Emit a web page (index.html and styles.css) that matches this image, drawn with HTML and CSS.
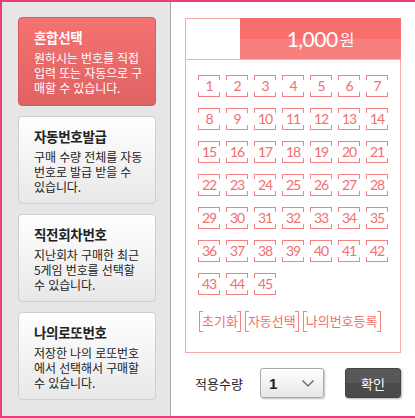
FILE: index.html
```html
<!DOCTYPE html>
<html lang="ko">
<head>
<meta charset="utf-8">
<link rel="stylesheet" href="styles.css">
</head>
<body>
<div class="page">
  <aside class="side">
    <div class="card card-active">
      <h3 class="card-title">혼합선택</h3>
      <p class="card-desc">원하시는 번호를 직접<br>입력 또는 자동으로 구<br>매할 수 있습니다.</p>
    </div>
    <div class="card">
      <h3 class="card-title">자동번호발급</h3>
      <p class="card-desc">구매 수량 전체를 자동<br>번호로 발급 받을 수<br>있습니다.</p>
    </div>
    <div class="card">
      <h3 class="card-title">직전회차번호</h3>
      <p class="card-desc">지난회차 구매한 최근<br>5게임 번호를 선택할<br>수 있습니다.</p>
    </div>
    <div class="card">
      <h3 class="card-title">나의로또번호</h3>
      <p class="card-desc">저장한 나의 로또번호<br>에서 선택해서 구매할<br>수 있습니다.</p>
    </div>
  </aside>
  <main class="main">
    <div class="board">
      <div class="board-head">
        <div class="head-blank"></div>
        <div class="price"><span class="price-num">1,000</span><span class="price-unit">원</span></div>
      </div>
      <div class="numbers">
        <span class="num">1</span><span class="num">2</span><span class="num">3</span><span class="num">4</span><span class="num">5</span><span class="num">6</span><span class="num">7</span>
        <span class="num">8</span><span class="num">9</span><span class="num">10</span><span class="num">11</span><span class="num">12</span><span class="num">13</span><span class="num">14</span>
        <span class="num">15</span><span class="num">16</span><span class="num">17</span><span class="num">18</span><span class="num">19</span><span class="num">20</span><span class="num">21</span>
        <span class="num">22</span><span class="num">23</span><span class="num">24</span><span class="num">25</span><span class="num">26</span><span class="num">27</span><span class="num">28</span>
        <span class="num">29</span><span class="num">30</span><span class="num">31</span><span class="num">32</span><span class="num">33</span><span class="num">34</span><span class="num">35</span>
        <span class="num">36</span><span class="num">37</span><span class="num">38</span><span class="num">39</span><span class="num">40</span><span class="num">41</span><span class="num">42</span>
        <span class="num">43</span><span class="num">44</span><span class="num">45</span>
      </div>
      <div class="actions">
        <span class="act">초기화</span>
        <span class="act">자동선택</span>
        <span class="act">나의번호등록</span>
      </div>
    </div>
    <div class="controls">
      <span class="qty-label">적용수량</span>
      <div class="select">
        <span class="select-val">1</span>
        <svg class="chev" width="12" height="7" viewBox="0 0 12 7"><path d="M0.5 0.5 L6 6 L11.5 0.5" fill="none" stroke="#555" stroke-width="1.1"/></svg>
      </div>
      <button class="ok">확인</button>
    </div>
  </main>
</div>
</body>
</html>
```

FILE: styles.css
```css
* { box-sizing: border-box; margin: 0; padding: 0; }
html, body { width: 415px; height: 418px; overflow: hidden; background: #fff; }
body { font-family: "Noto Sans CJK KR", "Noto Sans", sans-serif; color: #333; }

.page {
  width: 415px;
  height: 418px;
  display: flex;
  border-top: 2px solid #f03a7e;
  border-left: 2px solid #f03a7e;
  border-bottom: 2px solid #f03a7e;
}

.side {
  width: 169px;
  background: #e6e6e6;
  border-right: 1px solid #a5a5a5;
  padding: 15px 0 0 16px;
  display: flex;
  flex-direction: column;
  gap: 10px;
}

.card {
  width: 138px;
  height: 88px;
  border: 1px solid #cfcfcf;
  border-radius: 4px;
  background: linear-gradient(#ffffff, #e8e8e8);
  padding: 11px 0 0 15px;
  color: #222;
}
.card-active {
  height: 89px;
  background: linear-gradient(#f57272, #df6262);
  border-color: #d95b5b;
  color: #fff;
}
.card-title {
  font-size: 13.5px;
  font-weight: 700;
  line-height: 17px;
  letter-spacing: -0.3px;
}
.card-desc {
  margin-top: 4px;
  font-size: 12px;
  line-height: 15px;
  letter-spacing: -0.1px;
}

.main {
  flex: 1;
  padding: 16px 0 0 14px;
}

.board {
  width: 216px;
  border: 1px solid #f7aaad;
  padding-bottom: 20px;
}
.board-head {
  display: flex;
  height: 42px;
  border-bottom: 1px solid #f7aaad;
  margin-top: -1px;
}
.head-blank { width: 54px; }
.price {
  flex: 1;
  margin-right: -1px;
  background: linear-gradient(#f66e6e 0, #f66e6e 52%, #f87f7f 52%, #f87f7f 100%);
  color: #fff;
  display: flex;
  align-items: center;
  justify-content: center;
  gap: 2px;
}
.price-num { font-family: Lato, "Noto Sans", sans-serif; font-size: 21px; letter-spacing: -0.5px; }
.price-unit { font-size: 16px; }

.numbers {
  display: grid;
  grid-template-columns: repeat(7, 22px);
  column-gap: 6px;
  row-gap: 11px;
  padding: 15px 0 0 12px;
}
.num {
  width: 22px;
  height: 22px;
  border-top: 1px solid #f38282;
  border-bottom: 1px solid #f38282;
  background:
    linear-gradient(#f38282, #f38282) left top / 1px 4px no-repeat,
    linear-gradient(#f38282, #f38282) right top / 1px 4px no-repeat,
    linear-gradient(#f38282, #f38282) left bottom / 1px 4px no-repeat,
    linear-gradient(#f38282, #f38282) right bottom / 1px 4px no-repeat;
  font-family: Lato, "Noto Sans", sans-serif;
  font-size: 14px;
  line-height: 20px;
  letter-spacing: -1px;
  text-align: center;
  color: #f07070;
}

.actions {
  display: flex;
  gap: 4px;
  margin-top: 16px;
  padding-left: 13px;
}
.act {
  height: 21px;
  border-left: 1px solid #f38282;
  border-right: 1px solid #f38282;
  background:
    linear-gradient(#f38282, #f38282) left top / 3px 1px no-repeat,
    linear-gradient(#f38282, #f38282) right top / 3px 1px no-repeat,
    linear-gradient(#f38282, #f38282) left bottom / 3px 1px no-repeat,
    linear-gradient(#f38282, #f38282) right bottom / 3px 1px no-repeat;
  padding: 0 2px;
  font-size: 13px;
  line-height: 20px;
  color: #f07070;
}

.controls {
  display: flex;
  align-items: center;
  margin-top: 15px;
  padding-left: 10px;
  height: 30px;
}
.qty-label {
  font-size: 13px;
  color: #222;
  width: 65px;
}
.select {
  width: 64px;
  height: 30px;
  border: 1px solid #aaa;
  border-radius: 3px;
  background: linear-gradient(#ffffff, #e6e6e6);
  box-shadow: 1px 1px 2px rgba(0,0,0,0.25);
  display: flex;
  align-items: center;
  justify-content: space-between;
  padding: 0 9px 0 8px;
}
.select-val {
  font-family: "Liberation Sans", sans-serif;
  font-weight: 700;
  font-size: 15px;
  color: #222;
}
.chev { display: block; }
.ok {
  margin-left: 21px;
  width: 56px;
  height: 30px;
  border: 1px solid #444;
  border-radius: 3px;
  background: linear-gradient(#585858 0, #585858 50%, #4b4b4b 50%, #4b4b4b 100%);
  box-shadow: 1px 1px 2px rgba(0,0,0,0.3);
  color: #fff;
  font-family: "Noto Sans CJK KR", sans-serif;
  font-size: 13px;
}
```
